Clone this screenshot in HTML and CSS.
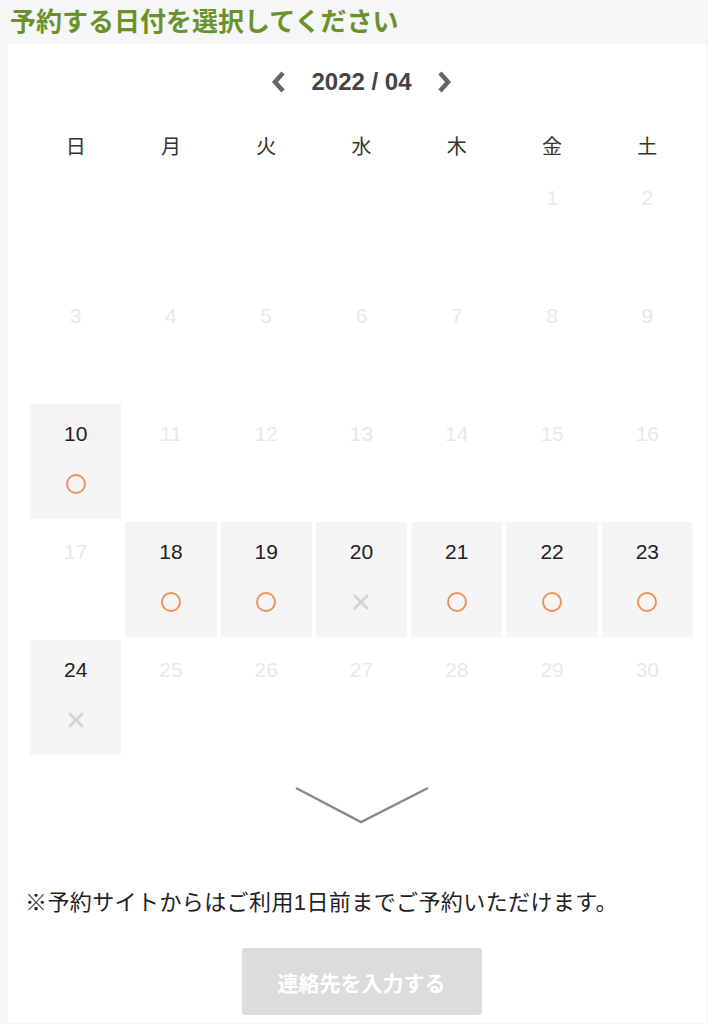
FILE: index.html
```html
<!DOCTYPE html>
<html lang="ja">

<head>
    <meta charset="UTF-8">
    <meta name="viewport" content="width=device-width, initial-scale=1.0">
    <title>予約日選択</title>

    <link rel="stylesheet" href="styles.css">
</head>

<body>
    <h1 class="page-title">予約する日付を選択してください</h1>
    <div class="panel">
        <div class="calendar">
            <div class="month-nav">
                <svg class="nav-arrow" width="15" height="24" viewBox="0 0 15 24"><polyline points="12,3 4,12 12,21" /></svg>
                <span class="month-label">2022 / 04</span>
                <svg class="nav-arrow" width="15" height="24" viewBox="0 0 15 24"><polyline points="3,3 11,12 3,21" /></svg>
            </div>
            <div class="weekdays">
                <div>日</div>
                <div>月</div>
                <div>火</div>
                <div>水</div>
                <div>木</div>
                <div>金</div>
                <div>土</div>
            </div>
            <div class="days">
                <div class="day"></div>
                <div class="day"></div>
                <div class="day"></div>
                <div class="day"></div>
                <div class="day"></div>
                <div class="day off"><span class="num">1</span></div>
                <div class="day off"><span class="num">2</span></div>

                <div class="day off"><span class="num">3</span></div>
                <div class="day off"><span class="num">4</span></div>
                <div class="day off"><span class="num">5</span></div>
                <div class="day off"><span class="num">6</span></div>
                <div class="day off"><span class="num">7</span></div>
                <div class="day off"><span class="num">8</span></div>
                <div class="day off"><span class="num">9</span></div>

                <div class="day open"><span class="num">10</span><span class="mark-ok"></span></div>
                <div class="day off"><span class="num">11</span></div>
                <div class="day off"><span class="num">12</span></div>
                <div class="day off"><span class="num">13</span></div>
                <div class="day off"><span class="num">14</span></div>
                <div class="day off"><span class="num">15</span></div>
                <div class="day off"><span class="num">16</span></div>

                <div class="day off"><span class="num">17</span></div>
                <div class="day open"><span class="num">18</span><span class="mark-ok"></span></div>
                <div class="day open"><span class="num">19</span><span class="mark-ok"></span></div>
                <div class="day open"><span class="num">20</span><svg class="mark-ng" width="18" height="18" viewBox="0 0 18 18"><path d="M2 2 L16 16 M16 2 L2 16" /></svg></div>
                <div class="day open"><span class="num">21</span><span class="mark-ok"></span></div>
                <div class="day open"><span class="num">22</span><span class="mark-ok"></span></div>
                <div class="day open"><span class="num">23</span><span class="mark-ok"></span></div>

                <div class="day open"><span class="num">24</span><svg class="mark-ng" width="18" height="18" viewBox="0 0 18 18"><path d="M2 2 L16 16 M16 2 L2 16" /></svg></div>
                <div class="day off"><span class="num">25</span></div>
                <div class="day off"><span class="num">26</span></div>
                <div class="day off"><span class="num">27</span></div>
                <div class="day off"><span class="num">28</span></div>
                <div class="day off"><span class="num">29</span></div>
                <div class="day off"><span class="num">30</span></div>
            </div>
            <div class="more">
                <svg width="136" height="40" viewBox="0 0 136 40"><polyline points="2,4 67,38 134,4" /></svg>
            </div>
        </div>
        <p class="note">※予約サイトからはご利用1日前までご予約いただけます。</p>
        <div class="actions">
            <button class="next-button" disabled>連絡先を入力する</button>
        </div>
    </div>
</body>

</html>
```

FILE: styles.css
```css
* {
    box-sizing: border-box;
}

body {
    margin: 0;
    background-color: #f5f6f8;
    font-family: "Liberation Sans", "Noto Sans CJK JP", sans-serif;
    color: #222;
}

.page-title {
    margin: 0;
    height: 44px;
    line-height: 44px;
    padding-left: 10px;
    font-size: 26px;
    font-weight: bold;
    color: #6b922a;
    white-space: nowrap;
}

.panel {
    background-color: white;
    margin: 0 2px 0 8px;
    padding-top: 23px;
    padding-bottom: 8px;
}

.calendar {
    padding: 0 13px 0 22px;
}

.month-nav {
    display: flex;
    justify-content: center;
    align-items: center;
    gap: 25px;
    height: 30px;
}

.month-label {
    font-size: 24px;
    font-weight: bold;
    color: #444;
}

.nav-arrow polyline {
    fill: none;
    stroke: #666;
    stroke-width: 4.5;
}

.weekdays {
    display: grid;
    grid-template-columns: repeat(7, 1fr);
    column-gap: 4px;
    margin-top: 38px;
    text-align: center;
    font-size: 20px;
    line-height: 24px;
    color: #333;
}

.days {
    display: grid;
    grid-template-columns: repeat(7, 1fr);
    grid-auto-rows: 115px;
    gap: 3px 4px;
    margin-top: 9px;
}

.day {
    display: flex;
    flex-direction: column;
    align-items: center;
    padding-top: 18px;
}

.day .num {
    font-size: 21px;
    line-height: 24px;
}

.day.off .num {
    color: #e8e8e8;
}

.day.open {
    background-color: #f5f5f5;
}

.day.open .num {
    color: #222;
}

.mark-ok {
    display: block;
    width: 20px;
    height: 20px;
    margin-top: 28px;
    border: 2.5px solid #f2915a;
    border-radius: 50%;
}

.mark-ng {
    display: block;
    margin-top: 29px;
}

.mark-ng path {
    stroke: #d4d4d4;
    stroke-width: 2.8;
    fill: none;
}

.more {
    display: flex;
    justify-content: center;
    margin-top: 29px;
}

.more polyline {
    fill: none;
    stroke: #8a8a8a;
    stroke-width: 2.5;
}

.note {
    margin: 64px 0 0 17px;
    font-size: 22px;
    line-height: 30px;
    letter-spacing: 0.4px;
    color: #222;
    white-space: nowrap;
}

.actions {
    display: flex;
    justify-content: center;
    padding-left: 9px;
    margin-top: 30px;
}

.next-button {
    width: 240px;
    height: 67px;
    border: 0;
    border-radius: 3px;
    background-color: #dcdcdc;
    color: white;
    font-family: "Liberation Sans", "Noto Sans CJK JP", sans-serif;
    font-size: 21px;
    font-weight: bold;
}
```
